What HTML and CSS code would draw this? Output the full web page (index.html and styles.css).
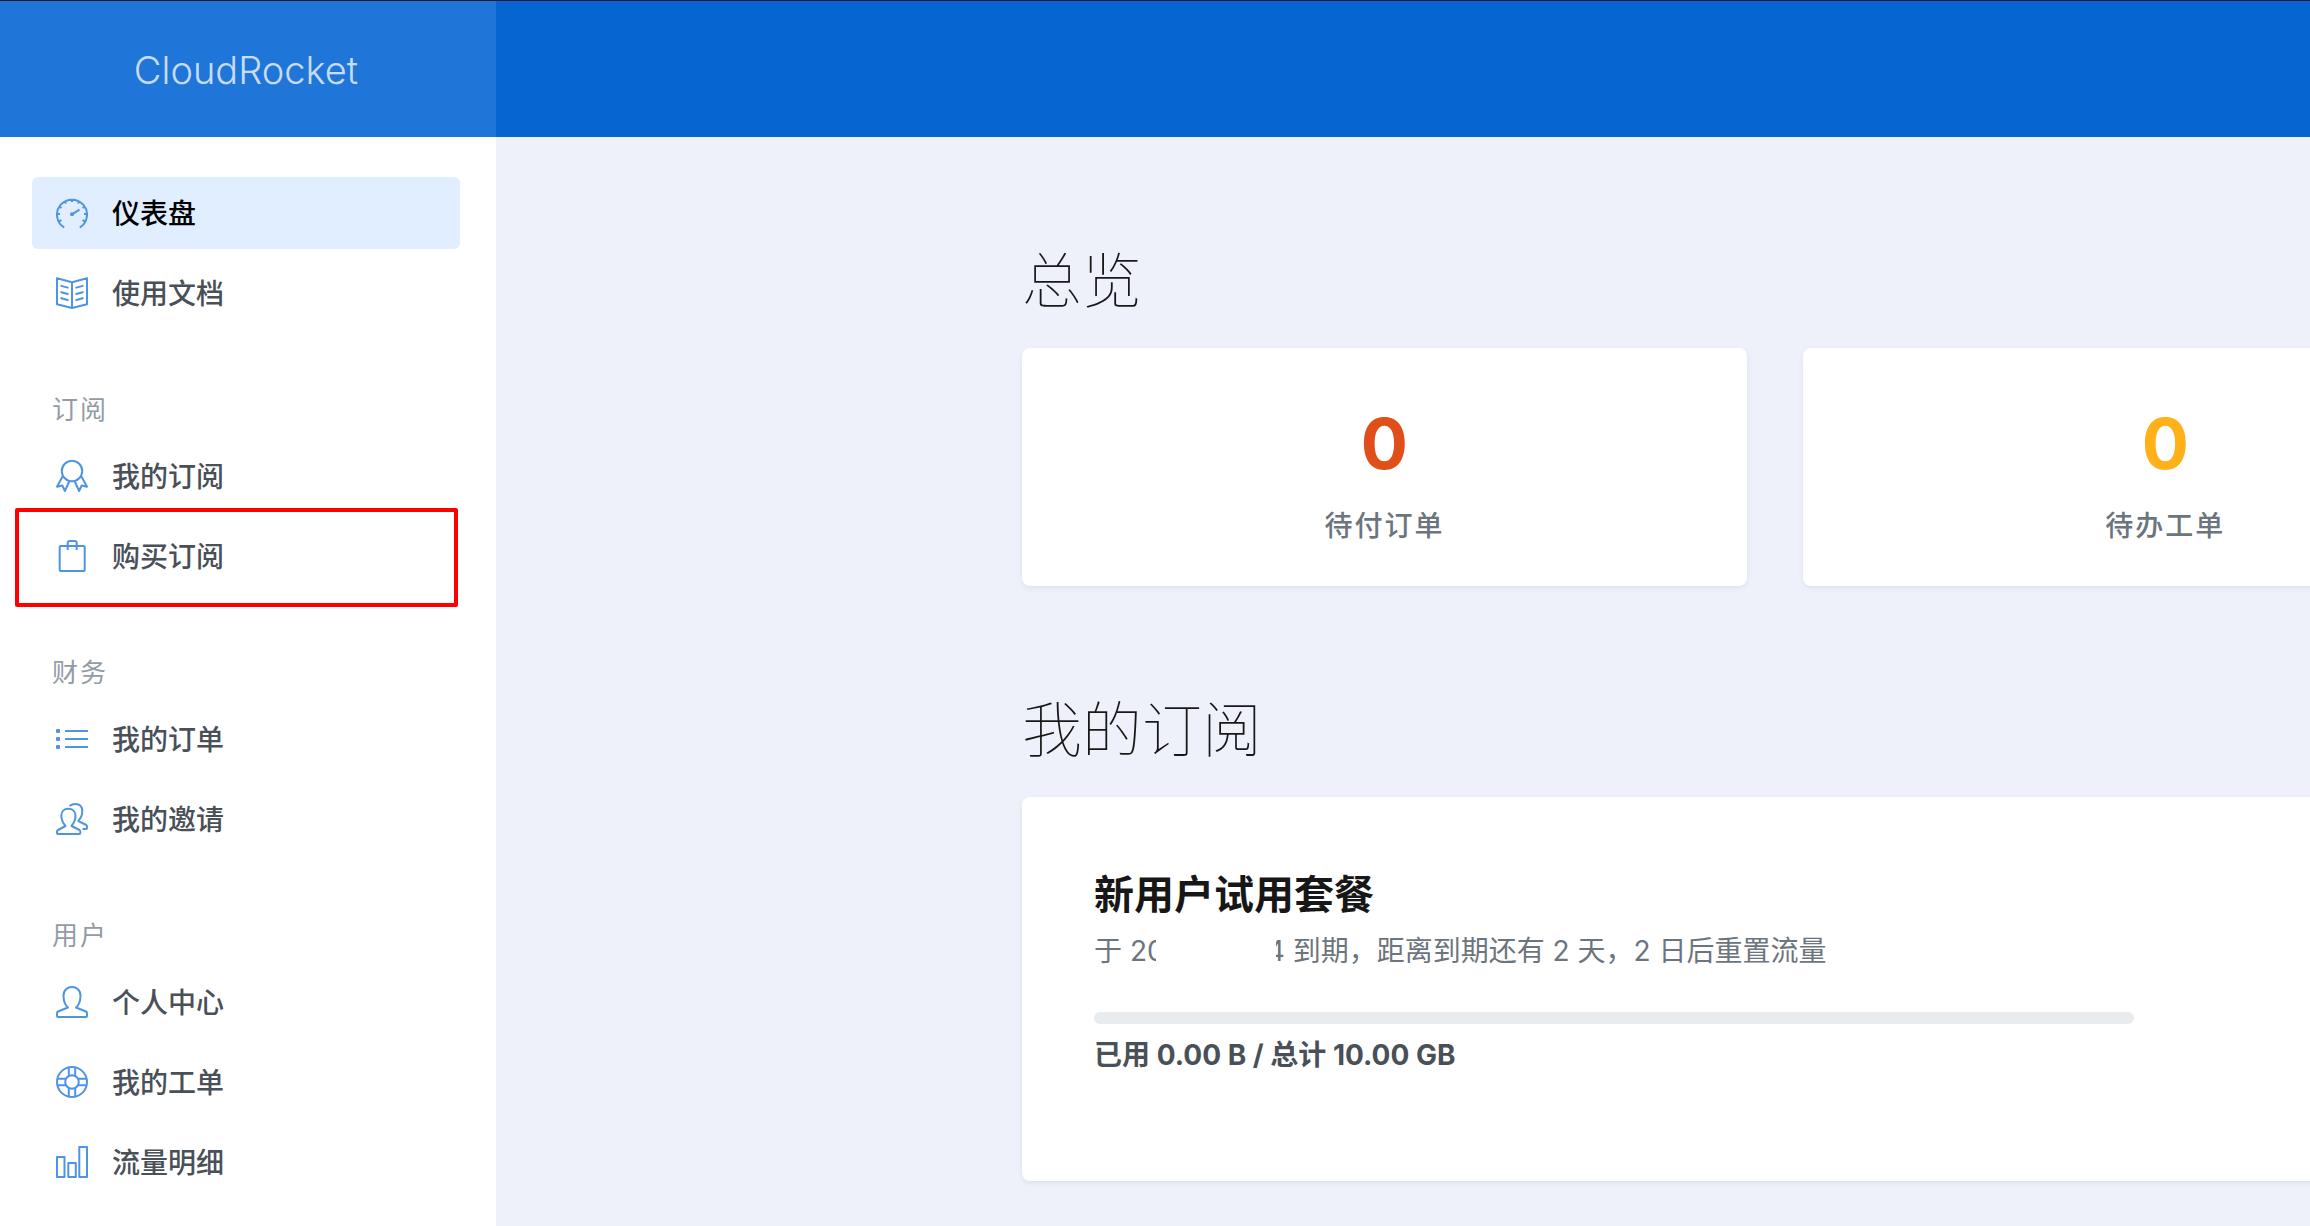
FILE: index.html
```html
<!DOCTYPE html>
<html lang="zh-CN">

<head>
    <meta charset="UTF-8">
    <meta name="viewport" content="width=device-width, initial-scale=1.0">
    <title>CloudRocket</title>
    <link rel="stylesheet" href="styles.css">
</head>

<body>
    <aside class="sidebar">
        <a class="brand" href="#">CloudRocket</a>
        <nav class="nav">
            <a class="nav-link active" href="#">
                <svg class="icon" viewBox="0 0 32 32"><path d="M8.3 30.5A15 15 0 1 1 23.7 30.5M16 2v3M8.8 4.5l1.2 2.1M23.2 4.5L22 6.6M3.5 9.8l2 1.2M28.500 9.8l-2 1.2M1 17h3M31 17h-3M3.5 24.200l2-1.2M28.500 24.200l-2-1.2M16 17.300l7.500-4.600" /><circle class="fill" cx="16" cy="17.2" r="2" /></svg>
                <span>仪表盘</span>
            </a>
            <a class="nav-link" href="#">
                <svg class="icon" viewBox="0 0 32 32"><path d="M1 1.3L16 5.3L31 1.3V27.3L16 31L1 27.3ZM16 5.3V31M4.5 8.6l8 2.3M4.5 15l8 2.3M4.5 21l8 2.3M27.5 8.6l-8 2.3M27.5 15l-8 2.3M27.5 21l-8 2.3" /></svg>
                <span>使用文档</span>
            </a>

            <h3 class="nav-heading">订阅</h3>
            <a class="nav-link" href="#">
                <svg class="icon" viewBox="0 0 32 32"><circle cx="16" cy="11" r="10.2" /><path d="M6.8 16L1 26.7L6.3 25.5L8.9 31L13.4 21M25.2 16L31 26.7L25.7 25.5L23.1 31L18.6 21" /></svg>
                <span>我的订阅</span>
            </a>
            <a class="nav-link marked" href="#">
                <svg class="icon" viewBox="0 0 32 32"><rect x="3.7" y="6" width="25" height="25" rx="1" /><path d="M11.7 10V3q0-2 2-2h5q2 0 2 2v7" /></svg>
                <span>购买订阅</span>
            </a>

            <h3 class="nav-heading">财务</h3>
            <a class="nav-link" href="#">
                <svg class="icon" viewBox="0 0 32 32"><path d="M9 8h23M9 16h23M9 24h23" /><rect class="fill" x="0" y="6" width="4" height="4" rx="1" /><rect class="fill" x="0" y="14" width="4" height="4" rx="1" /><rect class="fill" x="0" y="22" width="4" height="4" rx="1" /></svg>
                <span>我的订单</span>
            </a>
            <a class="nav-link" href="#">
                <svg class="icon" viewBox="0 0 32 32"><path d="M9.5 23C6.5 19.5 5.3 17 5.3 12.5C5.3 8.5 8 5.7 12.3 5.7S19.5 8.5 19.5 12.5C19.5 17 18.5 19.5 15.5 23L23.5 27Q24.3 27.5 24.3 28.5V30Q24.3 31 23.3 31H2Q1 31 1 30V28.5Q1 27.5 2 27ZM13.5 3Q16 1 19.5 1C23.5 1 26.3 3.5 26.3 8C26.3 12.5 25 15 22.3 18L30.3 22Q31 22.5 31 23.5V25Q31 26 30 26H26.5" /></svg>
                <span>我的邀请</span>
            </a>

            <h3 class="nav-heading">用户</h3>
            <a class="nav-link" href="#">
                <svg class="icon" viewBox="0 0 32 32"><path d="M12 21.5C9 19 7.5 15 7.5 9.5C7.5 4 11.5 1 16 1S24.5 4 24.5 9.5C24.5 15 23 19 20 21.5L30 25.5Q31 26 31 27.5V30Q31 31 30 31H2Q1 31 1 30V27.5Q1 26 2 25.5Z" /></svg>
                <span>个人中心</span>
            </a>
            <a class="nav-link" href="#">
                <svg class="icon" viewBox="0 0 32 32"><circle cx="16" cy="16" r="15" /><circle cx="16" cy="16" r="6.8" /><path d="M12.8 1.5V10M19.2 1.5V10M12.8 22V30.5M19.2 22V30.5M1.5 12.8H10M1.5 19.2H10M22 12.8H30.5M22 19.2H30.5" /></svg>
                <span>我的工单</span>
            </a>
            <a class="nav-link" href="#">
                <svg class="icon" viewBox="0 0 32 32"><rect x="1" y="11" width="7.5" height="20" /><rect x="12.3" y="17" width="7.5" height="14" /><rect x="23.3" y="1" width="7.7" height="30" /></svg>
                <span>流量明细</span>
            </a>
        </nav>
    </aside>

    <div class="page">
        <header class="topbar"></header>
        <main class="content">
            <h2 class="section-title">总览</h2>
            <div class="stats">
                <a class="card stat" href="#">
                    <span class="stat-value danger">0</span>
                    <span class="stat-label">待付订单</span>
                </a>
                <a class="card stat" href="#">
                    <span class="stat-value warning">0</span>
                    <span class="stat-label">待办工单</span>
                </a>
            </div>

            <h2 class="section-title">我的订阅</h2>
            <div class="card plan">
                <h3 class="plan-name">新用户试用套餐</h3>
                <p class="plan-expire">于 20<span class="mask"></span>4 到期，距离到期还有 2 天，2 日后重置流量</p>
                <div class="progress"></div>
                <p class="plan-usage">已用 0.00 B / 总计 10.00 GB</p>
            </div>
        </main>
    </div>
</body>

</html>
```

FILE: styles.css
```css
* {
    box-sizing: border-box;
}

body {
    font-family: Inter, "Noto Sans CJK SC", sans-serif;
    font-size: 28px;
    line-height: 40px;
    color: #495057;
    background-color: #eef1f9;
    margin: 0;
    border-top: 1px solid #0b1a2e;
    display: flex;
    min-height: 100vh;
}

h2,
h3,
p {
    margin: 0;
}

a {
    color: inherit;
    text-decoration: none;
}

/* Sidebar */
.sidebar {
    flex: 0 0 496px;
    background-color: #fff;
}

.brand {
    display: flex;
    align-items: center;
    justify-content: center;
    height: 136px;
    padding: 2px 4px 0 0;
    background-color: #1f75d8;
    color: rgba(255, 255, 255, 0.75);
    font-size: 38px;
    font-weight: 300;
}

.nav {
    padding: 40px 36px 19px 32px;
}

.nav-link {
    position: relative;
    display: flex;
    align-items: center;
    gap: 24px;
    height: 72px;
    margin-bottom: 8px;
    padding: 0 24px;
    border-radius: 6px;
    font-weight: 500;
}

.nav-link span {
    padding-top: 2px;
}

.nav-link.active {
    background-color: #e1eeff;
    color: #000;
}

.nav-link.marked::after {
    content: "";
    position: absolute;
    inset: -12px 2px -15px -17px;
    border: 4px solid #f00;
    border-radius: 2px;
}

.nav-heading {
    padding: 57px 20px 14px;
    color: #929ca5;
    font-size: 26px;
    font-weight: 400;
    line-height: 32px;
    letter-spacing: 2px;
}

.icon {
    width: 32px;
    height: 32px;
    fill: none;
    stroke: #4f94e3;
    stroke-width: 2;
    stroke-linejoin: round;
}

.icon .fill {
    fill: #4f94e3;
    stroke: none;
}

/* Page */
.page {
    flex: 1;
    min-width: 0;
    overflow: hidden;
}

.topbar {
    height: 136px;
    background-color: #0665d0;
}

.content {
    width: 83%;
    margin-left: 29%;
    padding-top: 104px;
}

.section-title {
    margin-bottom: 27px;
    color: #171717;
    font-size: 60px;
    font-weight: 100;
    line-height: 80px;
}

.card {
    background-color: #fff;
    border-radius: 8px;
    box-shadow: 0 2px 4px rgba(216, 222, 236, 0.8);
}

.stats {
    display: grid;
    grid-template-columns: 1fr 1fr;
    gap: 56px;
    margin-bottom: 104px;
}

.stat {
    display: flex;
    flex-direction: column;
    align-items: center;
    padding: 56px 40px 40px;
}

.stat-value {
    font-size: 70px;
    font-weight: 700;
    line-height: 80px;
}

.stat-label {
    margin-top: 22px;
    color: #6c757d;
    font-weight: 500;
    letter-spacing: 2px;
}

.danger {
    color: #e04f1a;
}

.warning {
    color: #ffb119;
}

.plan {
    padding: 70px 72px 106px;
}

.plan-name {
    color: #171717;
    font-size: 40px;
    font-weight: 700;
    line-height: 56px;
}

.plan-expire {
    margin: 8px 0 41px;
    color: #6c757d;
}

/* covers the middle of the date */
.mask {
    position: relative;
    display: inline-block;
    width: 120px;
    height: 28px;
    margin: 0 -9px;
    background-color: #fff;
    vertical-align: middle;
}

.progress {
    max-width: 1040px;
    height: 12px;
    margin-bottom: 11px;
    border-radius: 6px;
    background-color: #e9ecef;
}

.plan-usage {
    font-weight: 700;
}
```
